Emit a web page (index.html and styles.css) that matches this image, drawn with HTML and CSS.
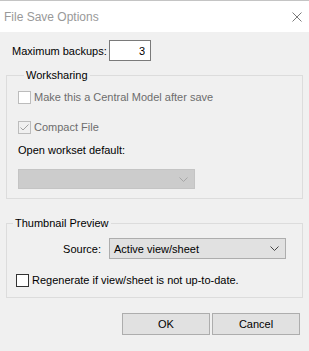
FILE: index.html
```html
<!DOCTYPE html>
<html lang="en">
<head>
  <meta charset="UTF-8" />
  <meta name="viewport" content="width=device-width, initial-scale=1.0" />
  <title>File Save Options</title>
  <link rel="stylesheet" href="styles.css">
</head>
<body>
  <div class="titlebar">
    <span class="title">File Save Options</span>
    <svg class="close" width="10" height="10" viewBox="0 0 10 10"><path d="M0.5 0.5 L9.5 9.5 M9.5 0.5 L0.5 9.5" stroke="#7a7a7a" stroke-width="1" fill="none"/></svg>
  </div>

  <div class="content">
    <div class="backups">
      <label for="backups">Maximum backups:</label>
      <input id="backups" class="num" type="text" value="3" />
    </div>

    <fieldset class="group">
      <legend>Worksharing</legend>
      <div class="row check-row first disabled">
        <input type="checkbox" class="box" disabled />
        <span>Make this a Central Model after save</span>
      </div>
      <div class="row check-row second disabled">
        <input type="checkbox" class="box" checked disabled />
        <span>Compact File</span>
      </div>
      <div class="row label-row">Open workset default:</div>
      <div class="select disabled-select">
        <span></span>
        <svg width="9" height="5" viewBox="0 0 9 5"><path d="M0.5 0.5 L4.5 4.5 L8.5 0.5" stroke="#a6a6a6" fill="none"/></svg>
      </div>
    </fieldset>

    <fieldset class="group thumb">
      <legend>Thumbnail Preview</legend>
      <div class="source-row">
        <span class="source-label">Source:</span>
        <div class="select">
          <span>Active view/sheet</span>
          <svg width="9" height="5" viewBox="0 0 9 5"><path d="M0.5 0.5 L4.5 4.5 L8.5 0.5" stroke="#444" fill="none"/></svg>
        </div>
      </div>
      <div class="row check-row regen">
        <input type="checkbox" class="box" />
        <span>Regenerate if view/sheet is not up-to-date.</span>
      </div>
    </fieldset>

    <div class="buttons">
      <button class="btn">OK</button>
      <button class="btn">Cancel</button>
    </div>
  </div>
</body>
</html>
```

FILE: styles.css
```css
body {
  margin: 0;
  background: #f0f0f0;
  font-family: "Liberation Sans", Arial, sans-serif;
  font-size: 11px;
  color: #000;
}
.titlebar {
  height: 31px;
  background: #fff;
  border-top: 1px solid #c4c4c4;
  display: flex;
  align-items: center;
  justify-content: space-between;
  padding: 0 7px 0 4px;
}
.title {
  color: #999;
  font-size: 12px;
}
.close {
  display: block;
}
.content {
  padding: 8px 6px 0 6px;
}
.backups {
  display: flex;
  align-items: center;
  padding-left: 6px;
}
.backups label {
  width: 97px;
  flex-shrink: 0;
  white-space: nowrap;
}
.num {
  box-sizing: border-box;
  width: 42px;
  height: 21px;
  border: 1px solid #7a7a7a;
  background: #fff;
  text-align: right;
  padding: 0 5px 0 0;
  margin: 0;
  font: inherit;
}
.group {
  margin: 7px 0 0 0;
  padding: 0 0 9px 11px;
  border: 1px solid #dcdcdc;
  min-width: 0;
}
.group legend {
  margin-left: 6px;
  padding: 0 2px;
  line-height: 14px;
  height: 14px;
}
.row {
  height: 16px;
  display: flex;
  align-items: center;
}
.check-row .box {
  appearance: none;
  -webkit-appearance: none;
  width: 13px;
  height: 13px;
  margin: 0 3px 0 0;
  border: 1px solid #333;
  background: #fff;
  box-sizing: border-box;
}
.disabled {
  color: #6d6d6d;
}
.disabled .box {
  border-color: #bcbcbc;
}
.disabled .box:checked {
  background: #f0f0f0 url("data:image/svg+xml,%3Csvg xmlns='http://www.w3.org/2000/svg' width='11' height='11'%3E%3Cpath d='M1.5 5.5 L4 8 L9.5 2.5' stroke='%23a0a0a0' fill='none'/%3E%3C/svg%3E") no-repeat center;
}
.first {
  margin-top: 7px;
}
.second {
  margin-top: 14px;
}
.label-row {
  margin-top: 7px;
}
.select {
  box-sizing: border-box;
  width: 177px;
  height: 21px;
  border: 1px solid #adadad;
  background: #e1e1e1;
  display: flex;
  align-items: center;
  justify-content: space-between;
  padding: 0 6px 0 4px;
}
.disabled-select {
  margin-top: 11px;
  height: 20px;
  background: #cccccc;
  border-color: #c4c4c4;
}
.thumb {
  margin-top: 17px;
  padding-left: 0;
}
.source-row {
  display: flex;
  align-items: center;
  margin-top: 8px;
}
.source-label {
  width: 94px;
  margin-right: 8px;
  text-align: right;
}
.regen {
  margin-top: 13px;
  padding-left: 9px;
}
.buttons {
  display: flex;
  justify-content: flex-end;
  gap: 2px;
  margin: 15px 3px 0 0;
}
.btn {
  width: 88px;
  height: 22px;
  background: #e1e1e1;
  border: 1px solid #adadad;
  font: inherit;
  color: #000;
  padding: 0;
}
```
